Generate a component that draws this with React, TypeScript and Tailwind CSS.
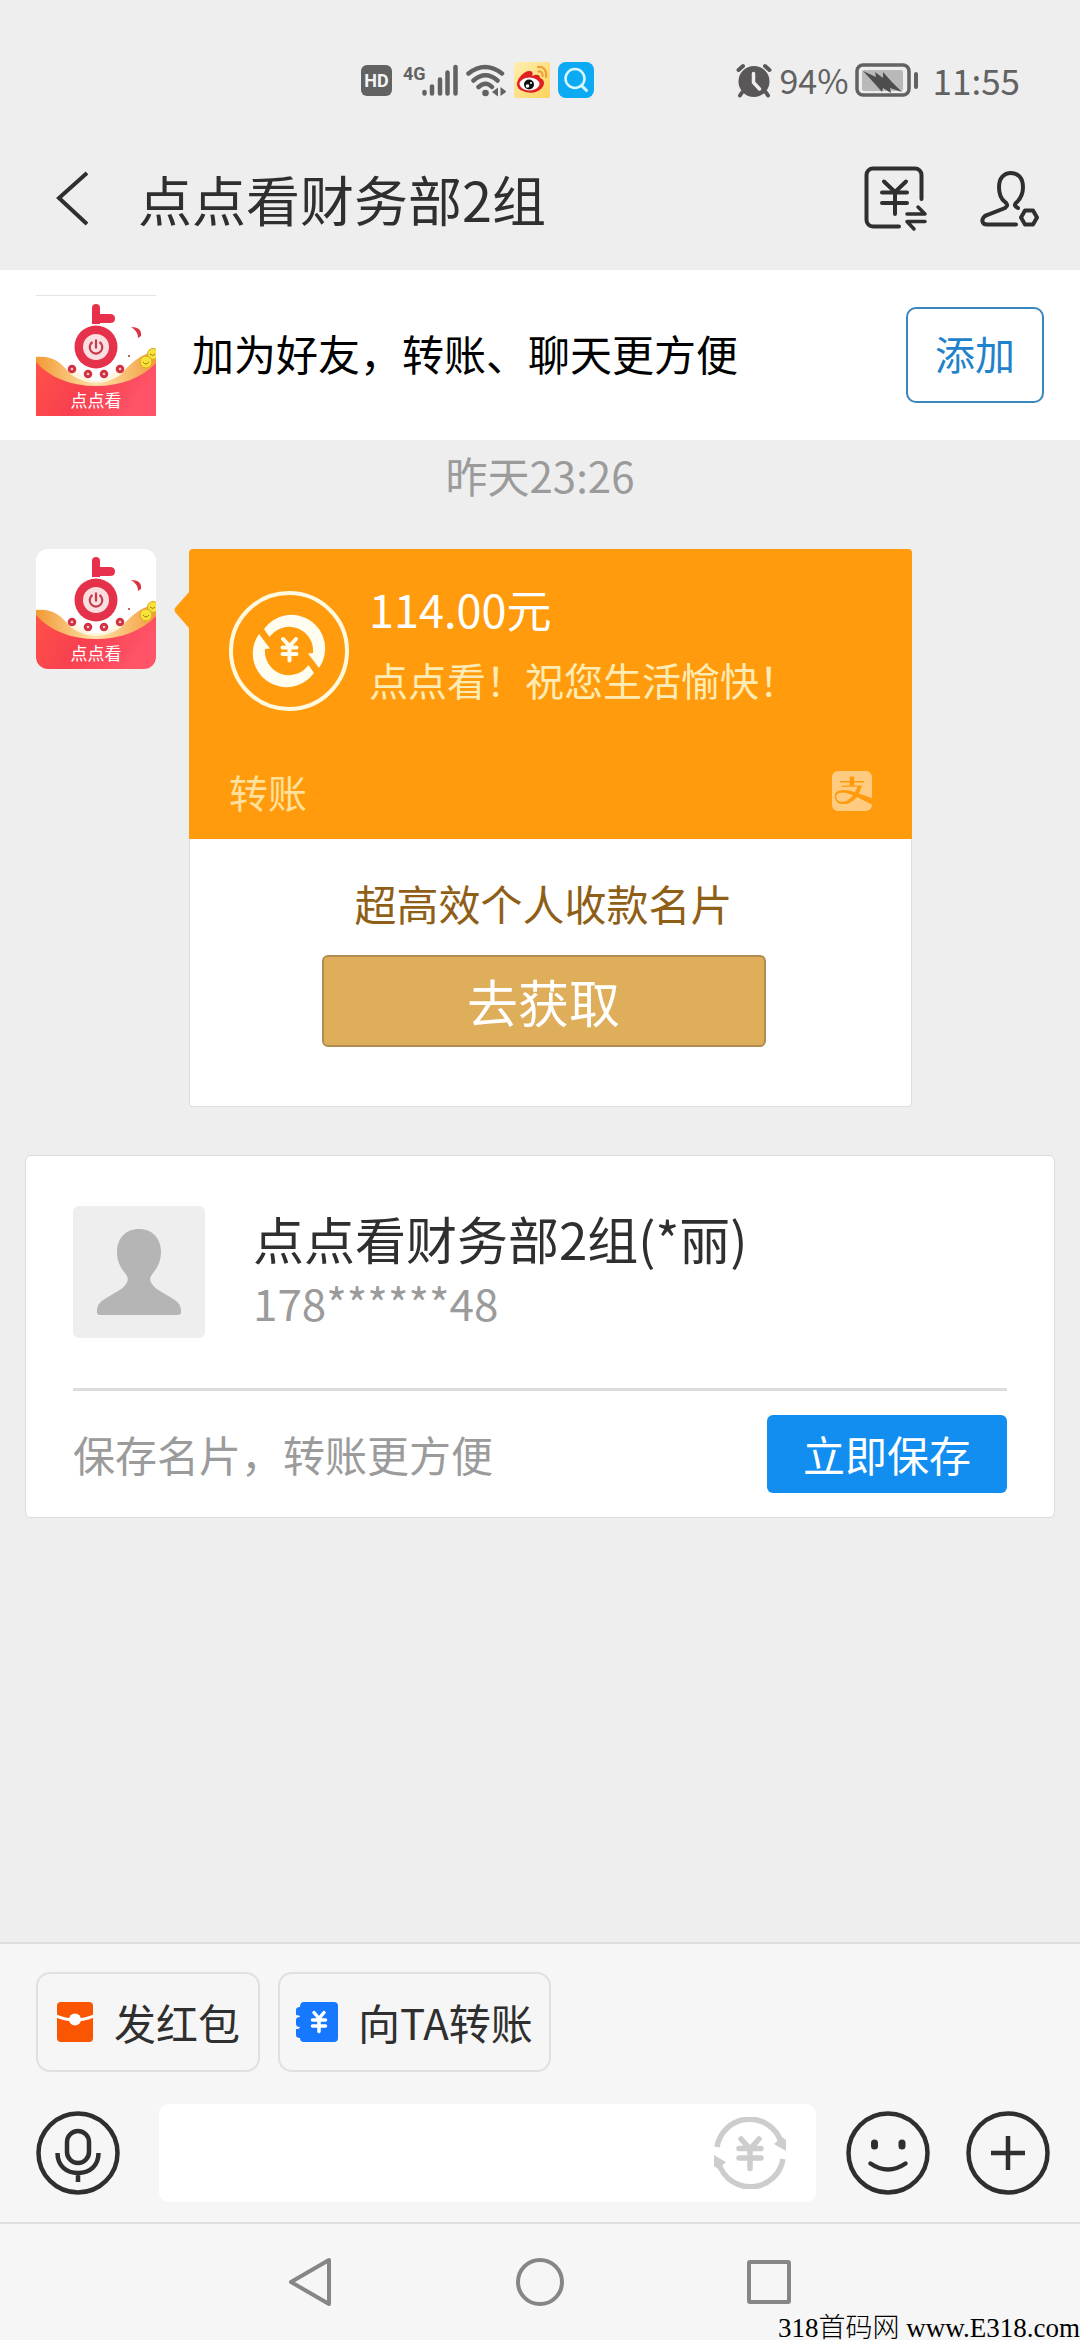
import React from "react";
import { FaAlipay } from "react-icons/fa";

const cjk = "font-['Noto_Sans_CJK_SC',sans-serif]";

function StatusBar() {
  return (
    <div className="flex h-[128px] items-center justify-between pt-8 pr-[60px] pl-[360px] text-[#626262]">
      <div className="flex items-center gap-2">
        <svg className="h-9 w-[98px]" viewBox="0 0 98 36" fill="#626262">
          <rect x="1" y="3" width="31" height="31" rx="6" />
          <text x="16.5" y="25" textAnchor="middle" fontSize="18" fontWeight="700" fill="#f4f4f4" fontFamily="Roboto, sans-serif">HD</text>
          <text x="43" y="18" fontSize="18" fontWeight="700" fontFamily="Roboto, sans-serif">4G</text>
          <g stroke="#626262" strokeWidth="4.5" strokeLinecap="round">
            <path d="M64.500 30V31.500M72 24.500V31.500M80 17.500V31.500M87.500 10.500V31.500M95.500 5V31.500" />
          </g>
        </svg>
        <svg className="h-9 w-[40px]" viewBox="0 0 40 36" fill="none" stroke="#626262" strokeWidth="4.5" strokeLinecap="round">
          <path d="M2.500 11.500Q19 -1.500 36 11.500M7.500 18.500Q19.500 8 31.500 18.500M12.500 25Q19.500 18.500 26 25" />
          <circle cx="19.500" cy="31" r="3.300" fill="#626262" stroke="none" />
          <path d="M32 25.500v9l-6-4.500zM34.500 25v9l6-4.500z" fill="#626262" stroke="none" />
        </svg>
        <svg className="h-9 w-9" viewBox="0 0 36 36">
          <defs>
            <linearGradient id="weibo" x1="0" y1="0" x2="1" y2="1">
              <stop offset="0" stopColor="#fdeeb0" />
              <stop offset="1" stopColor="#ffd35c" />
            </linearGradient>
          </defs>
          <rect width="36" height="36" rx="2" fill="url(#weibo)" />
          <path d="M3 22C3 16 11 8 16 9c3 0 3 3 2 5 4-2 8-2 8 2 5 2 5 6 2 10-4 5-13 6-19 3-4-1-6-4-6-7z" fill="#e01f20" />
          <ellipse cx="15.500" cy="22" rx="10" ry="6.500" fill="#fff" />
          <circle cx="15" cy="22.500" r="5" fill="#111" />
          <circle cx="13.500" cy="24" r="1.800" fill="#fff" />
          <circle cx="17" cy="21" r="1" fill="#fff" />
          <path d="M24 5c6-1 9 4 8 10M24.500 9.500c3-.5 4.500 2 4 4.500" fill="none" stroke="#eda235" strokeWidth="2.200" strokeLinecap="round" />
        </svg>
        <svg className="h-9 w-9" viewBox="0 0 36 36">
          <rect width="36" height="36" rx="8" fill="#0caaf2" />
          <circle cx="17" cy="16.500" r="9.500" fill="none" stroke="#d9f7ff" strokeWidth="2.500" />
          <path d="M23.500 23.500l5 5" stroke="#d9f7ff" strokeWidth="3" strokeLinecap="round" />
        </svg>
      </div>
      <div className="flex items-center">
        <svg className="h-9 w-9" viewBox="0 0 36 36" fill="none" stroke="#5a5758" strokeLinecap="round">
          <circle cx="18" cy="19.500" r="15.500" fill="#5a5758" stroke="none" />
          <path d="M2.500 8L7 4M33.500 8L29 4M6 30.500L4 33.500M30 30.500l2 3" strokeWidth="4" />
          <path d="M17.500 11.500v9l6 6.500" stroke="#eee" strokeWidth="3.500" />
        </svg>
        <span className="ml-2 text-[34px] leading-10">94%</span>
        <svg className="ml-[6px] h-9 w-16" viewBox="0 0 64 36">
          <rect x="2" y="3" width="52" height="30" rx="6" fill="none" stroke="#626262" strokeWidth="3.500" />
          <rect x="7" y="8" width="41" height="21" rx="2" fill="#b9b9b9" />
          <path d="M8 9l13 6-1-5 8 6 0-6 8 9 11 11-12-4 1 5-8-5-1 4-7-8z" fill="#4d4d4d" />
          <rect x="59" y="10" width="4" height="17" rx="2" fill="#626262" />
        </svg>
        <span className="ml-[14px] text-[35px] leading-10">11:55</span>
      </div>
    </div>
  );
}

function Header() {
  return (
    <header className="flex h-[142px] items-center px-10 text-[#2f2f2f]">
      <button aria-label="返回" className="flex h-16 w-[60px] items-center justify-center">
        <svg className="h-14 w-9" viewBox="0 0 36 56" fill="none" stroke="#2f2f2f" strokeWidth="4">
          <path d="M35 2L7 27l28 26" />
        </svg>
      </button>
      <h1 className="ml-[38px] flex-1 text-[54px] leading-[72px]">点点看财务部2组</h1>
      <button aria-label="收款转账">
        <svg className="h-[66px] w-16" viewBox="0 0 64 66" fill="none" stroke="#2f2f2f" strokeWidth="4" strokeLinecap="round" strokeLinejoin="round">
          <path d="M57.500 33V9a6.500 6.500 0 0 0-6.500-6.500H9A6.500 6.500 0 0 0 2.500 9v45a6.500 6.500 0 0 0 6.500 6.500h26" />
          <path d="M20 15.500l11 10.500 11-10.500M18 26.500h25M18 37h25M31 26.500V48" />
          <path d="M43 48h18l-7-7M61 55.500H43l7 7.500" strokeWidth="3.500" />
        </svg>
      </button>
      <button aria-label="联系人设置" className="ml-[52px]">
        <svg className="h-[60px] w-[60px]" viewBox="0 0 60 60" fill="none" stroke="#2f2f2f" strokeWidth="4" strokeLinecap="round">
          <path d="M38 39c-4-2-4-4-1-6 4-4 6-8 6-15C43 9 38 4 31 4S19 9 19 18c0 8 2 12 6 15 3 2 3 4 0 6L7 46c-3 1-5 4-4.500 6.500.5 2 2 3 4.500 3h29" />
          <path d="M45 41.500h8l4 7-4 7h-8l-4-7z" strokeLinejoin="round" />
        </svg>
      </button>
    </header>
  );
}

function BrandAvatar({ id, className }: { id: string; className: string }) {
  return (
    <svg className={className} viewBox="0 0 120 120" role="img" aria-label="点点看">
      <defs>
        <linearGradient id={`${id}-o`} x1="0" y1="0" x2="1" y2="0">
          <stop offset="0" stopColor="#f29a35" />
          <stop offset="0.5" stopColor="#fde2a8" />
          <stop offset="1" stopColor="#f39b3c" />
        </linearGradient>
        <linearGradient id={`${id}-r`} x1="0" y1="0" x2="1" y2="0.3">
          <stop offset="0" stopColor="#ff5148" />
          <stop offset="0.5" stopColor="#f8404f" />
          <stop offset="1" stopColor="#ff5468" />
        </linearGradient>
      </defs>
      <rect width="120" height="120" fill="#fff" />
      <path d="M0 61c16-2 24 5 33 15 14 12 40 12 54 0 9-10 18-18 33-21v45H0z" fill={`url(#${id}-o)`} />
      <path d="M0 66c14 16 36 24 60 24s46-8 60-23v53H0z" fill={`url(#${id}-r)`} />
      <path d="M38 72q22 26 44 0l4 6q-26 18-52 0z" fill="#fff4dc" />
      <path d="M56 28V12q0-4 4-4t4 4v6h10q5 0 5 4.500T74 27H64v1z" fill="#e8304c" />
      <circle cx="60" cy="51" r="21.500" fill="#e5324a" />
      <circle cx="60" cy="51" r="13" fill="#fbdfe0" />
      <path d="M56.500 46a6.300 6.300 0 1 0 7 0M60 43.500v9" fill="none" stroke="#c53a4c" strokeWidth="2.200" />
      <g fill="#f6c9cc" stroke="#cf3344" strokeWidth="3">
        <circle cx="36" cy="73" r="2.800" />
        <circle cx="52" cy="78" r="2.800" />
        <circle cx="68" cy="78" r="2.800" />
        <circle cx="84" cy="73" r="2.800" />
      </g>
      <path d="M95 31q11 0 10 9l-3 2q0-7-7-11z" fill="#dd3340" />
      <circle cx="93" cy="60" r="1" fill="#a33" />
      <g fill="#f7e23a" stroke="#d9a91e" strokeWidth="1">
        <circle cx="117" cy="58" r="5.500" />
        <circle cx="110" cy="66" r="6" />
      </g>
      <path d="M107 66q3 4 6 0M114 58q3 3 5 0" fill="none" stroke="#a8741b" strokeWidth="1" />
      <text x="60" y="111" textAnchor="middle" fontSize="17" fill="#fff" fontFamily="'Noto Sans CJK SC', sans-serif">点点看</text>
    </svg>
  );
}

function FriendBar() {
  return (
    <section className="flex h-[170px] items-center bg-white px-9">
      <div className="border-t border-[#e4e4e4]">
        <BrandAvatar id="bar" className="h-[120px] w-[120px]" />
      </div>
      <p className="ml-9 flex-1 pb-1 text-[42px] leading-[56px] text-black">加为好友，转账、聊天更方便</p>
      <button className="h-24 w-[138px] rounded-[10px] border-2 border-[#3a86bf] pb-1 text-[40px] leading-[56px] text-[#1f83cc]">添加</button>
    </section>
  );
}

function TransferBubble() {
  return (
    <div className="mt-[46px] flex items-start pl-9">
      <BrandAvatar id="msg" className="h-[120px] w-[120px] rounded-xl" />
      <svg className="mt-[43px] ml-[18px] h-9 w-[15px]" viewBox="0 0 15 36" fill="#ff9b0c">
        <path d="M15 0v36L1 20q-1-2 0-4z" />
      </svg>
      <article className="mr-[168px] flex-1">
        <div className="flex h-[290px] flex-col justify-between rounded-t bg-[#ff9b0c] px-10 pt-8 pb-5">
          <div className="flex">
            <svg className="mt-[10px] h-[120px] w-[120px] shrink-0" viewBox="0 0 120 120" fill="#fffdf0">
              <circle cx="60" cy="60" r="58" fill="none" stroke="#fffadf" strokeWidth="4" />
              <path d="M35 38A33.500 33.500 0 0 1 90 77L79 62.500l5-.5A24 24 0 0 0 40.500 46z" />
              <path d="M35 38A33.500 33.500 0 0 1 90 77L79 62.500l5-.5A24 24 0 0 0 40.500 46z" transform="rotate(180 60 60)" />
              <path d="M54 48l6.500 7 6.500-7M53.500 56.500h14M53.500 63h14M60.500 56v13.500" fill="none" stroke="#fffdf0" strokeWidth="4" strokeLinecap="round" />
            </svg>
            <div className="ml-5">
              <p className="text-[45px] leading-[56px] text-white">114.00元</p>
              <p className="mt-[14px] text-[39px] leading-[56px] text-[#ffebb4]">点点看！祝您生活愉快！</p>
            </div>
          </div>
          <div className="flex items-center justify-between">
            <span className="text-[39px] leading-[56px] text-[#ffe09c]">转账</span>
            <FaAlipay className="h-[46px] w-10 text-[#ffcb80]" />
          </div>
        </div>
        <div className="flex h-[268px] flex-col items-center rounded-b border border-t-0 border-[#dedede] bg-white pt-9 pr-[14px]">
          <p className="text-[42px] leading-[56px] text-[#8f5f17]">超高效个人收款名片</p>
          <button className="mt-6 h-[92px] w-[444px] rounded-md border-2 border-[#b08c4e] bg-[#deae5b] text-[51px] leading-[72px] text-white">去获取</button>
        </div>
      </article>
    </div>
  );
}

function ContactCard() {
  return (
    <section className="mx-[25px] mt-12 rounded-md border border-[#dcdcdc] bg-white px-[47px] pt-[50px] pb-6">
      <div className="flex">
        <svg className="h-[132px] w-[132px] rounded-md bg-[#eee]" viewBox="0 0 132 132" fill="#b5b5b5">
          <path d="M66 23c14 0 22 10 22 23 0 10-4 16-8 21-3 4-4 7-1 11 3 5 10 8 18 13 7 4 11 7 11 14v1q0 3-3 3H27q-3 0-3-3v-1c0-7 4-10 11-14 8-5 15-8 18-13 3-4 2-7-1-11-4-5-8-11-8-21 0-13 8-23 22-23z" />
        </svg>
        <div className="ml-12">
          <h2 className="text-[51px] leading-[64px] text-[#2f2f2f]">点点看财务部2组(*丽)</h2>
          <p className="text-[44px] leading-[64px] text-[#9b9b9b]">178******48</p>
        </div>
      </div>
      <hr className="mt-[50px] border-t-[3px] border-[#dcdcdc]" />
      <div className="mt-6 flex items-center justify-between">
        <span className="text-[42px] leading-[56px] text-[#9b9b9b]">保存名片，转账更方便</span>
        <button className="h-[78px] w-[240px] rounded-md bg-[#118eef] text-[42px] leading-[56px] text-white">立即保存</button>
      </div>
    </section>
  );
}

function Composer() {
  return (
    <footer className="border-t-2 border-[#dfdfdf] bg-[#f6f6f6] px-9 pt-7 text-[#2f2f2f]">
      <div className="flex gap-[18px]">
        <button className="flex h-[100px] items-center rounded-[14px] border-2 border-[#e0e0e0] px-[18px] text-[42px] leading-[56px]">
          <svg className="mr-5 h-10 w-[38px]" viewBox="0 0 38 40">
            <rect x="1" width="36" height="40" rx="4" fill="#fa5500" />
            <path d="M0 14q19 8 38 0" fill="none" stroke="#fff" strokeWidth="3" />
            <circle cx="19" cy="17.500" r="6" fill="#fff" />
          </svg>
          发红包
        </button>
        <button className="flex h-[100px] items-center rounded-[14px] border-2 border-[#e0e0e0] px-4 text-[42px] leading-[56px]">
          <svg className="mr-5 h-10 w-[42px]" viewBox="0 0 42 40">
            <path d="M8 0h30q4 0 4 4v32q0 4-4 4H8q-4 0-4-4-4 0-4-3v-6q4 0 4-2-4 0-4-3v-4q0-3 4-3 0-2-4-2V8q0-3 4-3 0-5 4-5z" fill="#1677ff" />
            <path d="M18 10.500l5 6 5-6M16.500 18h13M16.500 24h13M23 17v12.500" fill="none" stroke="#fff" strokeWidth="3.500" strokeLinecap="round" />
          </svg>
          向TA转账
        </button>
      </div>
      <div className="mt-8 flex items-center pb-5">
        <button aria-label="语音">
          <svg className="h-[84px] w-[84px]" viewBox="0 0 84 84" fill="none" stroke="#2f2f2f" strokeWidth="4.500">
            <circle cx="42" cy="42" r="39.500" />
            <rect x="31" y="20" width="22" height="32" rx="11" />
            <path d="M21.500 42c0 13 9 20 20.500 20s20.500-7 20.500-20M42 62v9" />
          </svg>
        </button>
        <div className="relative ml-[39px] h-[98px] flex-1">
          <input type="text" aria-label="消息" className="h-full w-full rounded-[10px] bg-white pr-[110px] pl-6 text-[42px] outline-none" />
          <button aria-label="转账" className="absolute top-[13px] right-[30px]">
            <svg className="h-[72px] w-[72px]" viewBox="0 0 72 72" fill="none" stroke="#cdcdcd" strokeWidth="5.500">
              <path d="M3 30A33 33 0 0 1 67 25M69 42A33 33 0 0 1 5 47" />
              <path d="M60 27l8-7 4 3v11zM12 45l-8 7-4-3V38z" fill="#cdcdcd" stroke="none" />
              <path d="M27 22l9 10 9-10M25 31.500h22M25 41h22M36 32v19.500" strokeLinecap="round" />
            </svg>
          </button>
        </div>
        <button aria-label="表情" className="ml-[30px]">
          <svg className="h-[84px] w-[84px]" viewBox="0 0 84 84" fill="none" stroke="#2f2f2f" strokeWidth="4.500">
            <circle cx="42" cy="42" r="39.500" />
            <path d="M28.500 32v3M56 32v3" strokeWidth="7" strokeLinecap="round" />
            <path d="M24.500 52.500q17.500 12 35 0" strokeLinecap="round" />
          </svg>
        </button>
        <button aria-label="更多" className="ml-9 -mr-[6px]">
          <svg className="h-[84px] w-[84px]" viewBox="0 0 84 84" fill="none" stroke="#2f2f2f" strokeWidth="4.500">
            <circle cx="42" cy="42" r="39.500" />
            <path d="M42 25v34M25 42h34" />
          </svg>
        </button>
      </div>
    </footer>
  );
}

function SystemNav() {
  return (
    <nav className="relative flex h-[118px] items-center justify-center gap-[180px] border-t-2 border-[#dfdfdf] bg-[#f6f6f6]">
      <button aria-label="系统返回">
        <svg className="h-[50px] w-[50px]" viewBox="0 0 50 50" fill="none" stroke="#868686" strokeWidth="4" strokeLinejoin="round">
          <path d="M44 3v44L6 25z" />
        </svg>
      </button>
      <button aria-label="主屏幕">
        <svg className="h-[50px] w-[50px]" viewBox="0 0 50 50" fill="none" stroke="#868686" strokeWidth="4">
          <circle cx="25" cy="25" r="22" />
        </svg>
      </button>
      <button aria-label="最近任务">
        <svg className="h-[50px] w-[50px]" viewBox="0 0 50 50" fill="none" stroke="#868686" strokeWidth="4" strokeLinejoin="round">
          <rect x="4" y="5" width="40" height="40" rx="1" />
        </svg>
      </button>
      <p className="absolute right-0 bottom-0 font-['Liberation_Serif','Noto_Sans_CJK_SC',serif] text-[27px] leading-6 font-light whitespace-nowrap text-black">318首码网 www.E318.com</p>
    </nav>
  );
}

export default function App() {
  return (
    <div className={`flex min-h-screen flex-col bg-[#eee] ${cjk}`}>
      <StatusBar />
      <Header />
      <FriendBar />
      <main className="flex-1">
        <time className="mt-[7px] block text-center text-[42px] leading-[56px] text-[#9b9b9b]">昨天23:26</time>
        <TransferBubble />
        <ContactCard />
      </main>
      <Composer />
      <SystemNav />
    </div>
  );
}
